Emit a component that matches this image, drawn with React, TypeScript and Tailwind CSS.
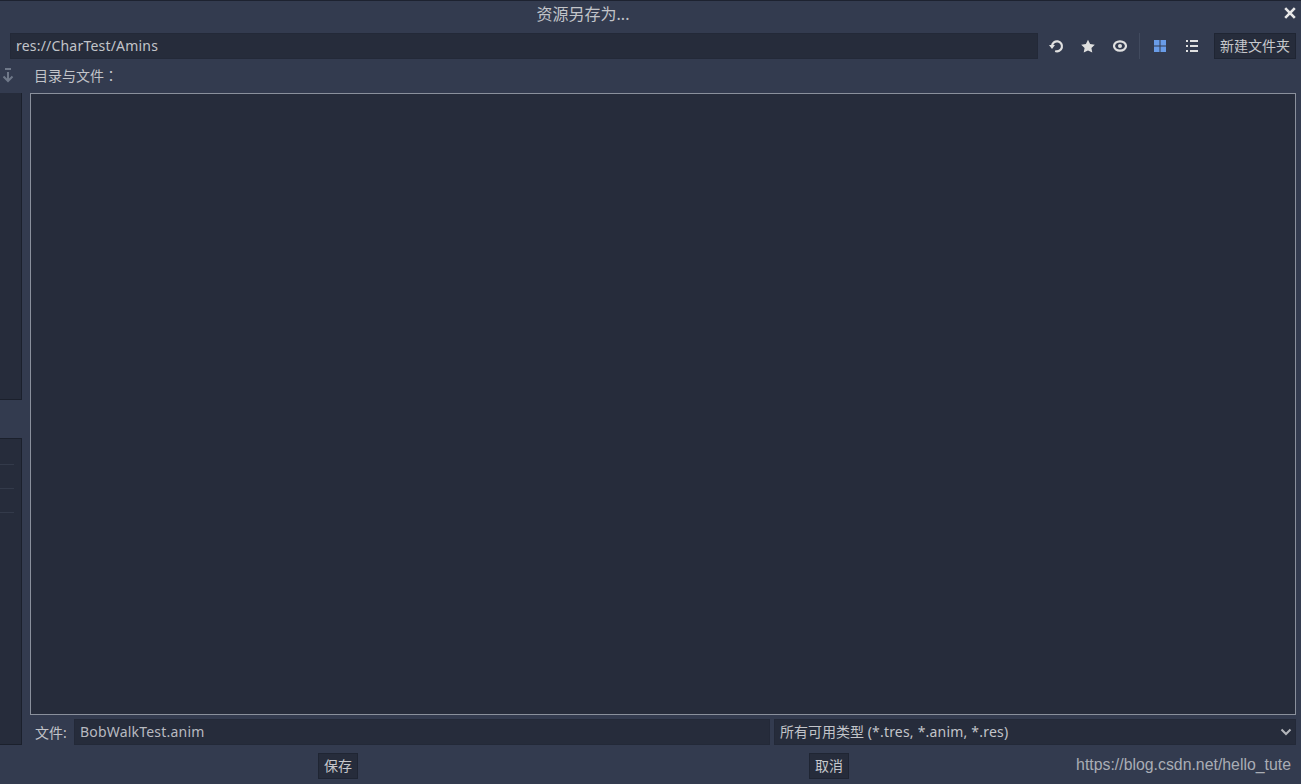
import React from 'react';

const font = { fontFamily: '"Noto Sans", "Noto Sans CJK SC", sans-serif' };

const Close = () => (
  <svg className="absolute right-[5px] top-[6px]" width="12" height="12" viewBox="0 0 12 12" fill="none" stroke="#e8e8e8" strokeWidth="2.6">
    <path d="M1.2 1.2 L10.8 10.8 M10.8 1.2 L1.2 10.8" />
  </svg>
);

const Undo = () => (
  <svg width="16" height="16" viewBox="0 0 16 16" fill="none">
    <path d="M4 8 A5 5 0 1 1 7.2 13" stroke="#e0e0e0" strokeWidth="2.2" />
    <path d="M1 7 L7 7 L4 11 Z" fill="#e0e0e0" />
  </svg>
);

const Star = () => (
  <svg width="16" height="16" viewBox="0 0 16 16">
    <path d="M8 1.8 L10.1 6 L14.8 6.7 L11.4 10 L12.3 14.6 L8 12.4 L3.7 14.6 L4.6 10 L1.2 6.7 L5.9 6 Z" fill="#e0e0e0" />
  </svg>
);

const Eye = () => (
  <svg width="16" height="16" viewBox="0 0 16 16" fill="none">
    <ellipse cx="8" cy="8" rx="6" ry="4.7" stroke="#e0e0e0" strokeWidth="2.2" />
    <circle cx="8" cy="8" r="2" fill="#e0e0e0" />
  </svg>
);

const Grid = () => (
  <svg width="16" height="16" viewBox="0 0 16 16" fill="#699ce8">
    <rect x="2" y="2" width="5.5" height="5.5" />
    <rect x="8.5" y="2" width="5.5" height="5.5" />
    <rect x="2" y="8.5" width="5.5" height="5.5" />
    <rect x="8.5" y="8.5" width="5.5" height="5.5" />
  </svg>
);

const List = () => (
  <svg width="16" height="16" viewBox="0 0 16 16" fill="#e0e0e0">
    <rect x="2" y="2" width="2" height="2" />
    <rect x="6" y="2" width="8" height="2" />
    <rect x="2" y="7" width="2" height="2" />
    <rect x="6" y="7" width="8" height="2" />
    <rect x="2" y="12" width="2" height="2" />
    <rect x="6" y="12" width="8" height="2" />
  </svg>
);

const ArrowDown = () => (
  <svg width="12" height="16" viewBox="0 0 12 16" fill="none" stroke="#6f7889" strokeWidth="2">
    <path d="M3 2 H9" />
    <path d="M6 5 V14" />
    <path d="M1.5 9.5 L6 14 L10.5 9.5" />
  </svg>
);

const Chevron = () => (
  <svg width="12" height="8" viewBox="0 0 12 8" fill="none" stroke="#b4b6bb" strokeWidth="2">
    <path d="M1.5 1.5 L6 6 L10.5 1.5" />
  </svg>
);

const IconBtn = ({ children }: { children: React.ReactNode }) => (
  <div className="flex w-8 h-[26px] items-center justify-center">{children}</div>
);

const SmallButton = ({ label }: { label: string }) => (
  <button className="h-[26px] px-[5px] bg-[#262c3b] border border-[#1f2533] text-[14px] leading-[24px] text-[#c6c8cc]">
    {label}
  </button>
);

export default function App() {
  return (
    <div className="flex flex-col w-[1301px] h-[784px] overflow-hidden bg-[#333b4f] text-[14px] text-[#c2c4c9]" style={font}>
      {/* title */}
      <div className="relative flex h-[33px] shrink-0 items-center justify-center border-t border-[#1d2230] pb-[7px]">
        <span className="ml-[-135px] text-[16px] text-[#c2c4c9]">资源另存为...</span>
        <Close />
      </div>

      {/* path row */}
      <div className="flex h-[26px] shrink-0 items-center pl-[10px] pr-[5px]">
        <div className="flex-1 h-full bg-[#262c3b] border border-[#232938] px-[5px] leading-[24px] tracking-[0.2px]">res://CharTest/Amins</div>
        <div className="flex ml-[2px] items-center">
          <IconBtn><Undo /></IconBtn>
          <IconBtn><Star /></IconBtn>
          <IconBtn><Eye /></IconBtn>
          <div className="ml-[3px] mr-[4px] h-[26px] w-px bg-[#414a5e]" />
          <IconBtn><Grid /></IconBtn>
          <IconBtn><List /></IconBtn>
        </div>
        <div className="ml-[6px]"><SmallButton label="新建文件夹" /></div>
      </div>

      <div className="flex min-h-0 flex-1">
        {/* left sidebar, cut off by the dialog */}
        <div className="flex w-[22px] shrink-0 flex-col">
          <div className="flex h-[34px] shrink-0 items-center justify-end pr-[8px] pb-[2px]"><ArrowDown /></div>
          <div className="h-[307px] shrink-0 bg-[#262c3b] border-r border-b border-[#1b202c]" />
          <div className="h-[38px] shrink-0" />
          <div className="flex h-[307px] shrink-0 flex-col bg-[#262c3b] border-t border-r border-b border-[#1b202c] pt-[25px]">
            <div className="h-[24px] w-[14px] shrink-0 border-t border-[#333a4a]" />
            <div className="h-[24px] w-[14px] shrink-0 border-t border-[#333a4a]" />
            <div className="h-[24px] w-[14px] shrink-0 border-t border-[#333a4a]" />
          </div>
        </div>

        {/* main column */}
        <div className="flex min-w-0 flex-1 flex-col pl-[8px] pr-[5px]">
          <div className="flex h-[34px] shrink-0 items-center pl-[4px] pb-[2px]" style={{ fontFamily: '"Noto Sans CJK TC", sans-serif' }}>目录与文件：</div>
          <div className="h-[622px] shrink-0 bg-[#262c3b] border border-[#8a909c]" />
          <div className="flex h-[26px] mt-[4px] shrink-0 items-center">
            <span className="w-[44px] shrink-0 pl-[5px]">文件:</span>
            <div className="w-[696px] h-full shrink-0 bg-[#262c3b] border border-[#232938] px-[5px] leading-[24px] tracking-[0.2px] text-[#b8bac0]">BobWalkTest.anim</div>
            <div className="flex ml-[4px] flex-1 h-full items-center justify-between bg-[#262c3b] border border-[#232938] pl-[5px] pr-[3px]">
              <span className="pb-[2px]">所有可用类型 <span className="tracking-[0.2px]">(*.tres, *.anim, *.res)</span></span>
              <Chevron />
            </div>
          </div>
        </div>
      </div>

      {/* bottom buttons */}
      <div className="relative flex h-[39px] shrink-0 items-start pt-[8px]">
        <div className="ml-[318px]"><SmallButton label="保存" /></div>
        <div className="ml-[451px]"><SmallButton label="取消" /></div>
        <span className="absolute right-[10px] top-[8px] text-[15.85px] text-[#a9adb5]" style={{ fontFamily: '"Liberation Sans", sans-serif' }}>
          https://blog.csdn.net/hello_tute
        </span>
      </div>
    </div>
  );
}
